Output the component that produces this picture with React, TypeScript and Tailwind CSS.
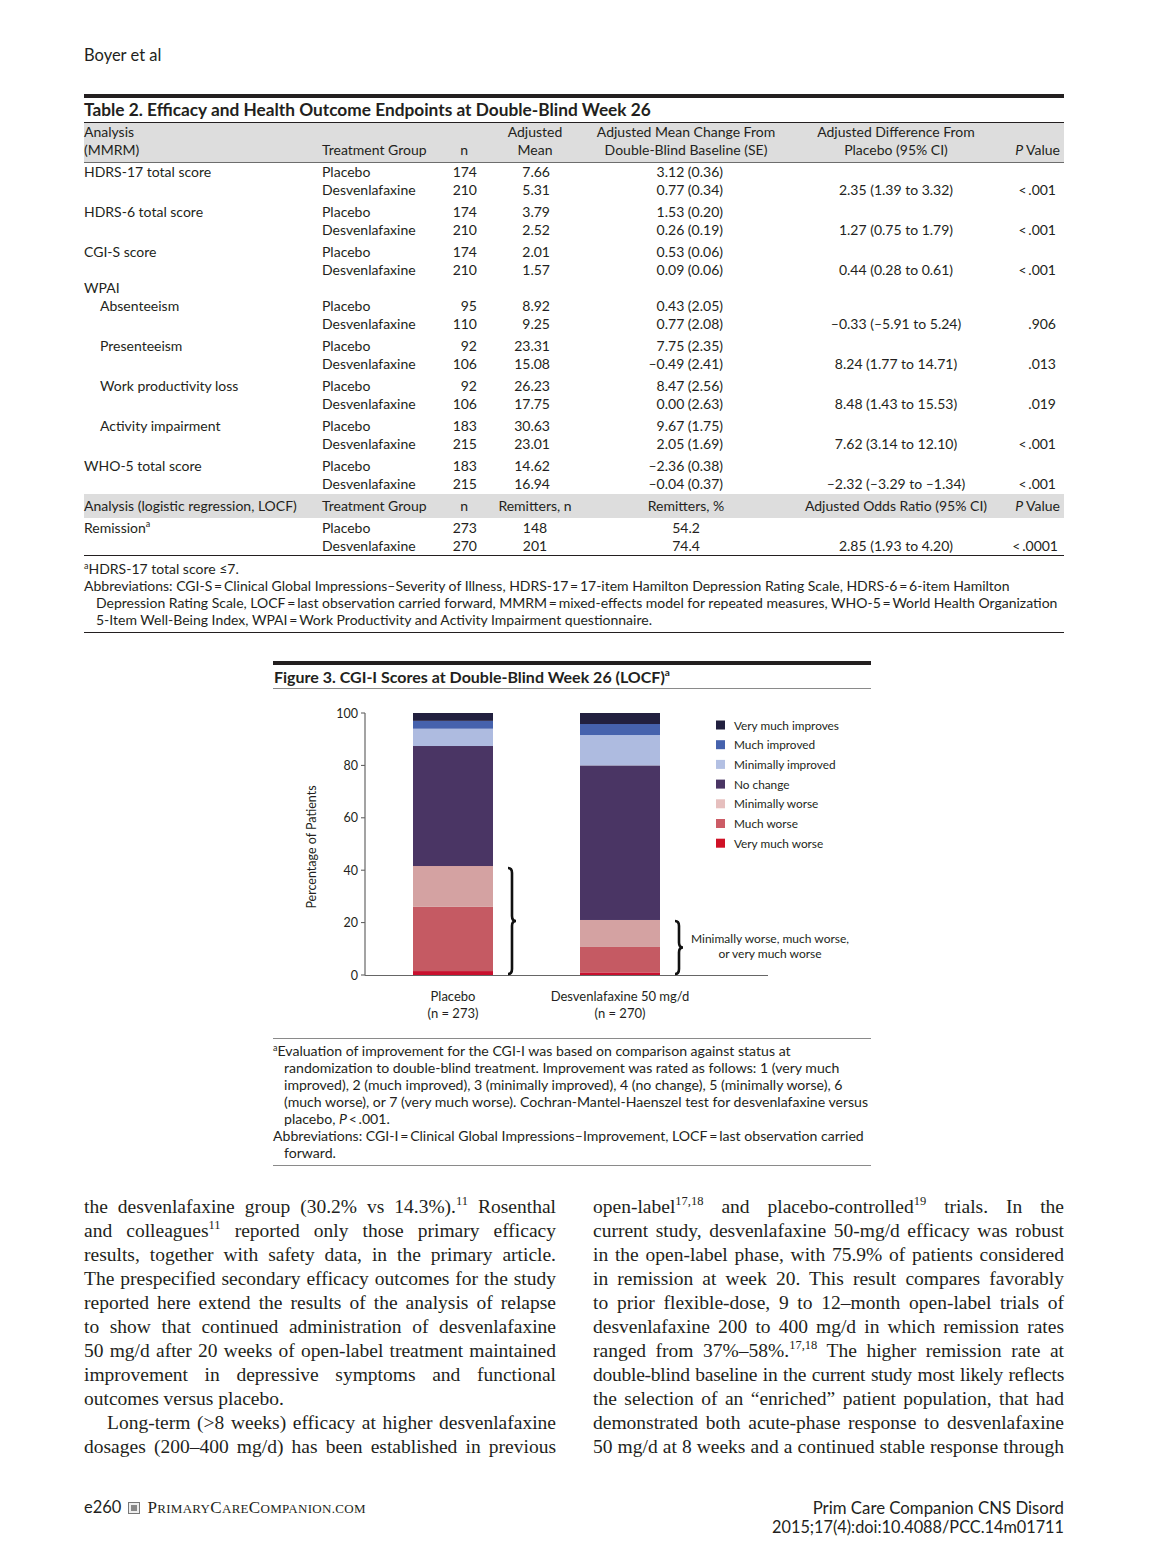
import React from 'react';

const INK = '#231f20';

type Row = [string, string, string, string, string, string];
type Group = { label: string; indent?: boolean; rows: Row[]; gap?: boolean };

const groups: Group[] = [
  { label: 'HDRS-17 total score', rows: [['Placebo', '174', '7.66', '3.12 (0.36)', '', ''], ['Desvenlafaxine', '210', '5.31', '0.77 (0.34)', '2.35 (1.39 to 3.32)', '<\u2009.001']] },
  { label: 'HDRS-6 total score', gap: true, rows: [['Placebo', '174', '3.79', '1.53 (0.20)', '', ''], ['Desvenlafaxine', '210', '2.52', '0.26 (0.19)', '1.27 (0.75 to 1.79)', '<\u2009.001']] },
  { label: 'CGI-S score', gap: true, rows: [['Placebo', '174', '2.01', '0.53 (0.06)', '', ''], ['Desvenlafaxine', '210', '1.57', '0.09 (0.06)', '0.44 (0.28 to 0.61)', '<\u2009.001']] },
  { label: 'WPAI', rows: [] },
  { label: 'Absenteeism', indent: true, rows: [['Placebo', '95', '8.92', '0.43 (2.05)', '', ''], ['Desvenlafaxine', '110', '9.25', '0.77 (2.08)', '–0.33 (–5.91 to 5.24)', '.906']] },
  { label: 'Presenteeism', indent: true, gap: true, rows: [['Placebo', '92', '23.31', '7.75 (2.35)', '', ''], ['Desvenlafaxine', '106', '15.08', '–0.49 (2.41)', '8.24 (1.77 to 14.71)', '.013']] },
  { label: 'Work productivity loss', indent: true, gap: true, rows: [['Placebo', '92', '26.23', '8.47 (2.56)', '', ''], ['Desvenlafaxine', '106', '17.75', '0.00 (2.63)', '8.48 (1.43 to 15.53)', '.019']] },
  { label: 'Activity impairment', indent: true, gap: true, rows: [['Placebo', '183', '30.63', '9.67 (1.75)', '', ''], ['Desvenlafaxine', '215', '23.01', '2.05 (1.69)', '7.62 (3.14 to 12.10)', '<\u2009.001']] },
  { label: 'WHO-5 total score', gap: true, rows: [['Placebo', '183', '14.62', '–2.36 (0.38)', '', ''], ['Desvenlafaxine', '215', '16.94', '–0.04 (0.37)', '–2.32 (–3.29 to –1.34)', '<\u2009.001']] },
];

const GRID = 'grid grid-cols-[238px_118px_38px_114px_188px_232px_52px]';

function DataRow({ label, indent, r }: { label: string; indent?: boolean; r: Row | null }) {
  return (
    <div className={`${GRID} h-[18px] leading-[18px]`}>
      <div className={indent ? 'pl-[16px]' : ''}>{label}</div>
      <div>{r ? r[0] : ''}</div>
      <div className="text-right pr-[1px]">{r ? r[1] : ''}</div>
      <div className="text-right pr-[42px]">{r ? r[2] : ''}</div>
      <div className="text-right pr-[57px]">{r ? r[3] : ''}</div>
      <div className="text-center">{r ? r[4] : ''}</div>
      <div className="text-right pr-[8px]">{r ? r[5] : ''}</div>
    </div>
  );
}

function Table() {
  return (
    <div className="w-[980px] mt-[29px] font-['Lato',sans-serif] text-[14px]">
      <div className="h-[4px] bg-[#231f20]" />
      <div className="h-[24px] leading-[24px] font-bold text-[17.3px]">
        Table 2. Efficacy and Health Outcome Endpoints at Double-Blind Week 26
      </div>
      <div className="h-px bg-[#231f20]" />
      <div className={`${GRID} bg-[#dddddd] pb-[3px] border-b border-[#6d6d6d] leading-[18px]`}>
        <div>
          Analysis
          <br />
          (MMRM)
        </div>
        <div className="pt-[18px]">Treatment Group</div>
        <div className="pt-[18px] text-right pr-[10px]">n</div>
        <div className="text-center">
          Adjusted
          <br />
          Mean
        </div>
        <div className="text-center">
          Adjusted Mean Change From
          <br />
          Double-Blind Baseline (SE)
        </div>
        <div className="text-center">
          Adjusted Difference From
          <br />
          Placebo (95% CI)
        </div>
        <div className="pt-[18px] text-right pr-[4px] whitespace-nowrap">
          <i>P</i> Value
        </div>
      </div>
      {groups.map((g, gi) => (
        <div key={gi} className={g.gap ? 'mt-[4px]' : ''}>
          {g.rows.length === 0 ? (
            <DataRow label={g.label} r={null} />
          ) : (
            g.rows.map((r, ri) => <DataRow key={ri} label={ri === 0 ? g.label : ''} indent={g.indent} r={r} />)
          )}
        </div>
      ))}
      <div className={`${GRID} bg-[#dddddd] mt-[1px] py-[3px] leading-[18px]`}>
        <div className="whitespace-nowrap">Analysis (logistic regression, LOCF)</div>
        <div>Treatment Group</div>
        <div className="text-right pr-[10px]">n</div>
        <div className="text-center">Remitters, n</div>
        <div className="text-center">Remitters, %</div>
        <div className="text-center">Adjusted Odds Ratio (95% CI)</div>
        <div className="text-right pr-[4px] whitespace-nowrap">
          <i>P</i> Value
        </div>
      </div>
      <div className="pt-[1px] border-b border-[#231f20]">
        <div className={`${GRID} h-[18px] leading-[18px]`}>
          <div>
            Remission<sup className="text-[9px] top-[-6px]">a</sup>
          </div>
          <div>Placebo</div>
          <div className="text-right pr-[1px]">273</div>
          <div className="text-center">148</div>
          <div className="text-center">54.2</div>
          <div />
          <div />
        </div>
        <div className={`${GRID} h-[18px] leading-[18px]`}>
          <div />
          <div>Desvenlafaxine</div>
          <div className="text-right pr-[1px]">270</div>
          <div className="text-center">201</div>
          <div className="text-center">74.4</div>
          <div className="text-center">2.85 (1.93 to 4.20)</div>
          <div className="text-right pr-[6px]">&lt;{'\u2009'}.0001</div>
        </div>
      </div>
      <div className="pt-[4px] pb-[4px] border-b border-[#231f20] text-[14px] leading-[17px] whitespace-nowrap">
        <div>
          <sup className="text-[9px] top-[-5px]">a</sup>HDRS-17 total score ≤7.
        </div>
        <div>
          Abbreviations: CGI-S{'\u2009=\u2009'}Clinical Global Impressions–Severity of Illness, HDRS-17{'\u2009=\u2009'}17-item Hamilton Depression Rating Scale, HDRS-6{'\u2009=\u2009'}6-item Hamilton
        </div>
        <div className="pl-[12px]">
          Depression Rating Scale, LOCF{'\u2009=\u2009'}last observation carried forward, MMRM{'\u2009=\u2009'}mixed-effects model for repeated measures, WHO-5{'\u2009=\u2009'}World Health Organization
        </div>
        <div className="pl-[12px]">
          5-Item Well-Being Index, WPAI{'\u2009=\u2009'}Work Productivity and Activity Impairment questionnaire.
        </div>
      </div>
    </div>
  );
}

const BAR_COLORS = ['#c8102e', '#c55a63', '#d4a2a2', '#4a3564', '#aebbe0', '#4662ad', '#22203f'];
const placebo = [0, 1.5, 26, 41.6, 87.4, 94, 97, 100];
const desv = [0, 1, 10.7, 21, 80, 91.6, 95.8, 100];
const yv = (v: number) => 286 - v * 2.62;

function brace(x0: number, y0: number, y1: number, w: number) {
  const ym = (y0 + y1) / 2;
  const xm = x0 + w / 2;
  const r = 5;
  return `M ${x0} ${y0} Q ${xm} ${y0} ${xm} ${y0 + r} L ${xm} ${ym - r} Q ${xm} ${ym} ${x0 + w} ${ym} Q ${xm} ${ym} ${xm} ${ym + r} L ${xm} ${y1 - r} Q ${xm} ${y1} ${x0} ${y1}`;
}

const legend = [
  ['Very much improves', '#22203f'],
  ['Much improved', '#4662ad'],
  ['Minimally improved', '#b3c0e3'],
  ['No change', '#4a3564'],
  ['Minimally worse', '#e6bfbe'],
  ['Much worse', '#cc5c66'],
  ['Very much worse', '#cf1126'],
];

function Chart() {
  const bar = (x: number, cum: number[]) =>
    BAR_COLORS.map((c, i) => (
      <rect key={i} x={x} y={yv(cum[i + 1])} width={80} height={yv(cum[i]) - yv(cum[i + 1])} fill={c} />
    ));
  return (
    <svg width={598} height={349} viewBox="0 0 598 349" className="block" fontFamily="Lato, sans-serif" fill={INK}>
      {[0, 20, 40, 60, 80, 100].map((t) => (
        <g key={t}>
          <line x1={88} x2={92} y1={yv(t)} y2={yv(t)} stroke="#555" strokeWidth={1} />
          <text x={85} y={yv(t)} textAnchor="end" dominantBaseline="central" fontSize={12.5}>
            {t}
          </text>
        </g>
      ))}
      <text
        x={38}
        y={158}
        textAnchor="middle"
        dominantBaseline="central"
        fontSize={12.5}
        transform="rotate(-90 38 158)"
      >
        Percentage of Patients
      </text>
      {bar(140, placebo)}
      {bar(307, desv)}
      <line x1={92} x2={92} y1={yv(100)} y2={286.5} stroke="#666" strokeWidth={1.2} />
      <line x1={92} x2={495} y1={286.5} y2={286.5} stroke="#666" strokeWidth={1.2} />
      <path d={brace(235, 179, 285, 8)} fill="none" stroke="#111" strokeWidth={2.6} />
      <path d={brace(402, 232, 285, 8)} fill="none" stroke="#111" strokeWidth={2.6} />
      <text x={497} y={249} textAnchor="middle" dominantBaseline="central" fontSize={12}>
        Minimally worse, much worse,
      </text>
      <text x={497} y={264} textAnchor="middle" dominantBaseline="central" fontSize={12}>
        or very much worse
      </text>
      {legend.map(([label, c], i) => {
        const cy = 36 + i * 19.7;
        return (
          <g key={label}>
            <rect x={443} y={cy - 4.5} width={9} height={9} fill={c} />
            <text x={461} y={cy} dominantBaseline="central" fontSize={11.8}>
              {label}
            </text>
          </g>
        );
      })}
      <text x={180} y={307} textAnchor="middle" dominantBaseline="central" fontSize={13}>
        Placebo
      </text>
      <text x={180} y={324} textAnchor="middle" dominantBaseline="central" fontSize={13}>
        (n = 273)
      </text>
      <text x={347} y={307} textAnchor="middle" dominantBaseline="central" fontSize={13}>
        Desvenlafaxine 50 mg/d
      </text>
      <text x={347} y={324} textAnchor="middle" dominantBaseline="central" fontSize={13}>
        (n = 270)
      </text>
    </svg>
  );
}

function Figure() {
  return (
    <div className="ml-[189px] w-[598px] mt-[28px] font-['Lato',sans-serif]">
      <div className="h-[4px] bg-[#231f20]" />
      <div className="h-[23px] leading-[23px] font-bold text-[16px] pl-[1px]">
        Figure 3. CGI-I Scores at Double-Blind Week 26 (LOCF)<sup className="text-[10px] top-[-7px]">a</sup>
      </div>
      <div className="h-px bg-[#8a8a8a]" />
      <Chart />
      <div className="border-t border-[#8a8a8a] border-b pt-[3px] pb-[4px] text-[14.1px] leading-[17px] whitespace-nowrap">
        <div>
          <sup className="text-[9px] top-[-5px]">a</sup>Evaluation of improvement for the CGI-I was based on comparison against status at
        </div>
        <div className="pl-[11px]">randomization to double-blind treatment. Improvement was rated as follows: 1 (very much</div>
        <div className="pl-[11px]">improved), 2 (much improved), 3 (minimally improved), 4 (no change), 5 (minimally worse), 6</div>
        <div className="pl-[11px]">(much worse), or 7 (very much worse). Cochran-Mantel-Haenszel test for desvenlafaxine versus</div>
        <div className="pl-[11px]">
          placebo, <i>P</i>
          {'\u2009<\u2009'}.001.
        </div>
        <div>
          Abbreviations: CGI-I{'\u2009=\u2009'}Clinical Global Impressions–Improvement, LOCF{'\u2009=\u2009'}last observation carried
        </div>
        <div className="pl-[11px]">forward.</div>
      </div>
    </div>
  );
}

function Sup({ children }: { children: React.ReactNode }) {
  return <sup className="text-[12.5px] top-[-8px]">{children}</sup>;
}

function Line({ children, last, indent, track }: { children: React.ReactNode; last?: boolean; indent?: boolean; track?: string }) {
  return (
    <div
      className={`h-[24px] leading-[24px] whitespace-nowrap ${last ? 'text-left' : 'text-justify [text-align-last:justify]'} ${indent ? 'pl-[23px]' : ''} ${track ?? ''}`}
    >
      {children}
    </div>
  );
}

function Body() {
  return (
    <div className="mt-[29px] flex gap-[37px] font-['Liberation_Serif',serif] text-[19.5px]">
      <div className="w-[472px]">
        <Line>
          the desvenlafaxine group (30.2% vs 14.3%).<Sup>11</Sup> Rosenthal
        </Line>
        <Line>
          and colleagues<Sup>11</Sup> reported only those primary efficacy
        </Line>
        <Line>results, together with safety data, in the primary article.</Line>
        <Line>The prespecified secondary efficacy outcomes for the study</Line>
        <Line>reported here extend the results of the analysis of relapse</Line>
        <Line>to show that continued administration of desvenlafaxine</Line>
        <Line>50 mg/d after 20 weeks of open-label treatment maintained</Line>
        <Line>improvement in depressive symptoms and functional</Line>
        <Line last>outcomes versus placebo.</Line>
        <Line indent>Long-term (&gt;8 weeks) efficacy at higher desvenlafaxine</Line>
        <Line>dosages (200–400 mg/d) has been established in previous</Line>
      </div>
      <div className="w-[471px]">
        <Line>
          open-label<Sup>17,18</Sup> and placebo-controlled<Sup>19</Sup> trials. In the
        </Line>
        <Line>current study, desvenlafaxine 50-mg/d efficacy was robust</Line>
        <Line>in the open-label phase, with 75.9% of patients considered</Line>
        <Line>in remission at week 20. This result compares favorably</Line>
        <Line>to prior flexible-dose, 9 to 12–month open-label trials of</Line>
        <Line>desvenlafaxine 200 to 400 mg/d in which remission rates</Line>
        <Line>
          ranged from 37%–58%.<Sup>17,18</Sup> The higher remission rate at
        </Line>
        <Line track="tracking-[-0.25px]">double-blind baseline in the current study most likely reflects</Line>
        <Line>the selection of an “enriched” patient population, that had</Line>
        <Line>demonstrated both acute-phase response to desvenlafaxine</Line>
        <Line>50 mg/d at 8 weeks and a continued stable response through</Line>
      </div>
    </div>
  );
}

function Footer() {
  return (
    <div className="mt-[39px] flex justify-between items-start">
      <div className="flex items-center h-[19px] leading-[19px] text-[16px]">
        <span className="font-['Lato',sans-serif] text-[16.5px]">e260</span>
        <span className="ml-[7px] w-[12px] h-[12px] border border-[#777] bg-[#eee] flex items-center justify-center">
          <span className="w-[6px] h-[6px] bg-[#888]" />
        </span>
        <span className="ml-[7px] font-['Liberation_Serif',serif] text-[17px] tracking-[0.3px]">
          P<span className="uppercase text-[13px]">rimary</span>C<span className="uppercase text-[13px]">are</span>C
          <span className="uppercase text-[13px]">ompanion.com</span>
        </span>
      </div>
      <div className="text-right font-['Lato',sans-serif] leading-[19px]">
        <div className="text-[16.8px]">Prim Care Companion CNS Disord</div>
        <div className="text-[16.3px]">2015;17(4):doi:10.4088/PCC.14m01711</div>
      </div>
    </div>
  );
}

export default function App() {
  return (
    <div className="w-[1170px] h-[1566px] bg-white text-[#231f20] overflow-hidden">
      <div className="pl-[84px] w-[1064px] pt-[45px]">
        <div className="h-[20px] leading-[20px] text-[16.5px] font-['Lato',sans-serif]">Boyer et al</div>
        <Table />
        <Figure />
        <Body />
        <Footer />
      </div>
    </div>
  );
}
